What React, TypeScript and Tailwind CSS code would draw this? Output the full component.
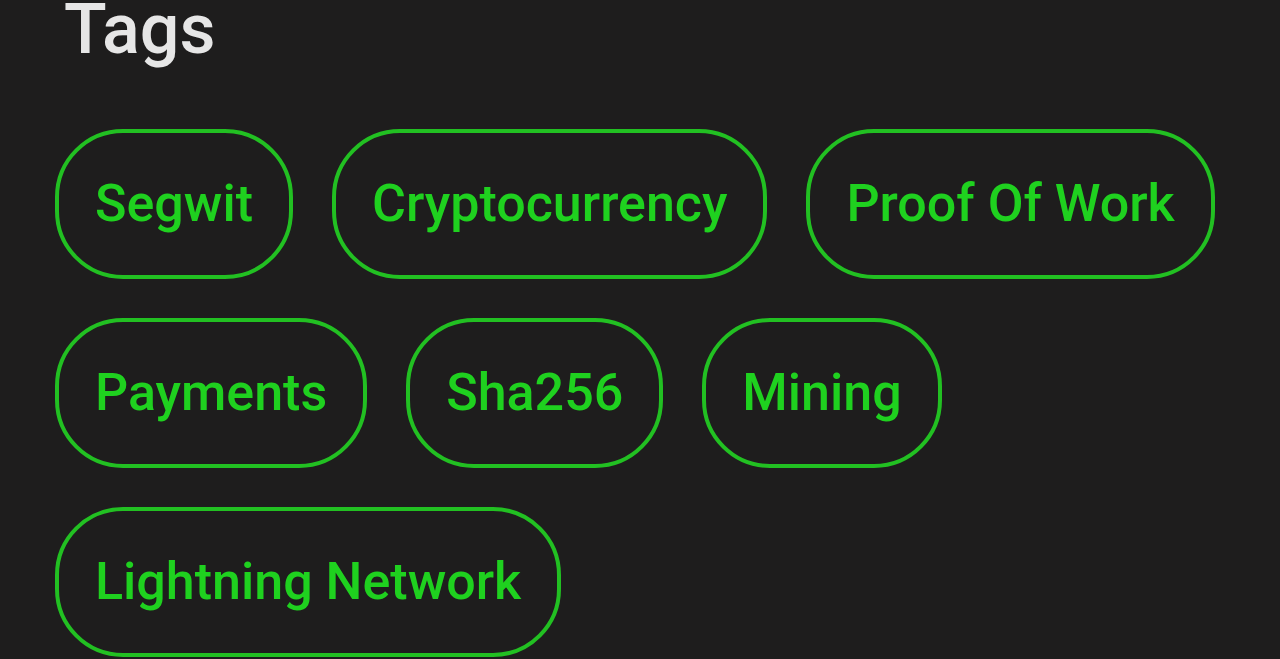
const tags = [
  "Segwit",
  "Cryptocurrency",
  "Proof Of Work",
  "Payments",
  "Sha256",
  "Mining",
  "Lightning Network",
];

function Tag({ label }: { label: string }) {
  return (
    <div className="h-[150px] flex items-center rounded-[68px] border-4 border-[#22c022] px-[36px] text-[52px] leading-none font-medium text-[#1fd11f]">
      {label}
    </div>
  );
}

export default function App() {
  return (
    <div
      className="w-[1280px] h-[659px] overflow-hidden bg-[#1e1d1d] pl-[55px]"
      style={{ fontFamily: "Roboto, 'Liberation Sans', sans-serif" }}
    >
      <h2 className="mt-[-6px] ml-[9px] text-[70px] leading-none font-medium text-[#e6e6e6]">
        Tags
      </h2>
      <div className="mt-[65px] w-[1190px] flex flex-wrap gap-[39px]">
        {tags.map((t) => (
          <Tag key={t} label={t} />
        ))}
      </div>
    </div>
  );
}
